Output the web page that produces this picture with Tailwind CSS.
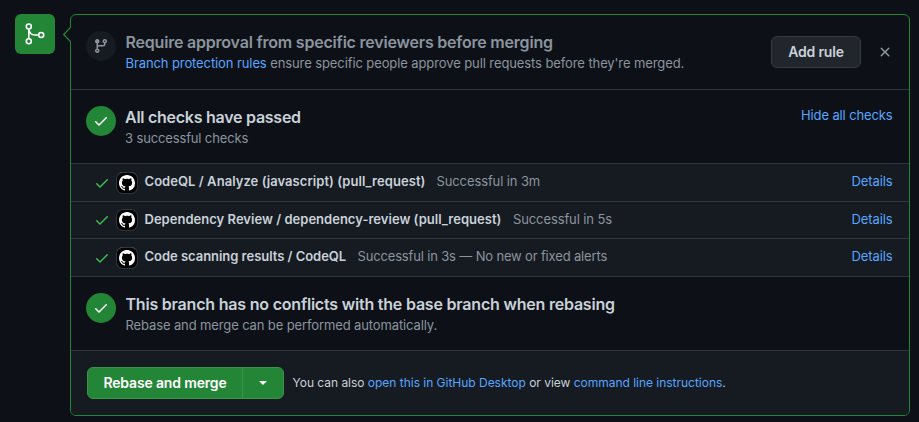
<!DOCTYPE html>
<html lang="en">
<head>
<meta charset="utf-8">
<title>Merge status</title>
<script src="https://cdn.jsdelivr.net/npm/@tailwindcss/browser@4"></script>
</head>
<body class="bg-[#0d1117] w-[919px] h-[422px] overflow-hidden font-['Inter','Liberation_Sans',sans-serif] text-[13px] leading-5 text-[#c9d1d9]">
<svg class="hidden">
  <symbol id="check" viewBox="0 0 16 16"><path d="M13.78 4.22a.75.75 0 010 1.06l-7.25 7.25a.75.75 0 01-1.06 0L2.22 9.28a.75.75 0 011.06-1.06L6 10.94l6.72-6.72a.75.75 0 011.06 0z"/></symbol>
  <symbol id="mark" viewBox="0 0 16 16"><path d="M8 0C3.58 0 0 3.58 0 8c0 3.54 2.29 6.53 5.47 7.59.4.07.55-.17.55-.38 0-.19-.01-.82-.01-1.49-2.01.37-2.53-.49-2.69-.94-.09-.23-.48-.94-.82-1.13-.28-.15-.68-.52-.01-.53.63-.01 1.08.58 1.23.82.72 1.21 1.87.87 2.33.66.07-.52.28-.87.51-1.07-1.78-.2-3.64-.89-3.64-3.95 0-.87.31-1.59.82-2.15-.08-.2-.36-1.02.08-2.12 0 0 .67-.21 2.2.82.64-.18 1.32-.27 2-.27.68 0 1.36.09 2 .27 1.53-1.04 2.2-.82 2.2-.82.44 1.1.16 1.92.08 2.12.51.56.82 1.27.82 2.15 0 3.07-1.87 3.75-3.65 3.95.29.25.54.73.54 1.48 0 1.07-.01 1.93-.01 2.2 0 .21.15.46.55.38A8.013 8.013 0 0016 8c0-4.42-3.58-8-8-8z"/></symbol>
</svg>
<div class="flex pt-[14px] pl-[15px] gap-[15px]">
  <div class="size-10 shrink-0 rounded-md bg-[#238636] text-white">
    <svg class="size-10" viewBox="0 0 40 40" fill="none" stroke="currentColor" stroke-width="1.6"><circle cx="13.800" cy="12.500" r="2.500"/><circle cx="13.800" cy="27.200" r="2.500"/><circle cx="26.200" cy="21" r="2.500"/><path d="M13.800 15v9.700M13.800 15c.3 3.800 3 6 6.500 6h3.300"/></svg>
  </div>
  <div class="relative w-[840px] h-[402px] rounded-md border border-[#238636] flex flex-col">
    <svg class="absolute -left-2 top-[11px] w-2 h-[18px]" viewBox="0 0 8 18"><path d="M8 1.200.7 8.500 8 15.800z" fill="#0d1117"/><path d="M7.700 1.200.7 8.500l7 7.300" fill="none" stroke="#238636" stroke-width="1.300"/></svg>
    <section class="h-[75px] shrink-0 border-b border-[#30363d] flex pl-[15px] pr-[16px]">
      <div class="size-[30px] mt-4 rounded-full bg-[#161b22] text-[#8b949e] grid place-items-center"><svg class="size-4" viewBox="0 0 16 16" fill="currentColor"><path d="M11.750 2.500a.75.75 0 100 1.500.75.75 0 000-1.500zm-2.250.75a2.250 2.250 0 113 2.122V6A2.500 2.500 0 0110 8.500H6a1 1 0 00-1 1v1.128a2.251 2.251 0 11-1.500 0V5.372a2.250 2.250 0 111.500 0v1.836A2.492 2.492 0 016 7h4a1 1 0 001-1v-.628A2.250 2.250 0 019.500 3.250zM4.250 12a.75.75 0 100 1.500.75.75 0 000-1.500zM3.500 3.250a.75.75 0 111.500 0 .75.75 0 01-1.500 0z"/></svg></div>
      <div class="ml-[9.5px] pt-4 grow whitespace-nowrap text-[#8b949e]">
        <h3 class="text-base leading-[22px] font-semibold tracking-[-0.205px]">Require approval from specific reviewers before merging</h3>
        <p class="tracking-[-0.1px]"><a class="text-[#58a6ff]">Branch protection rules</a> ensure specific people approve pull requests before they're merged.</p>
      </div>
      <button class="mt-[21px] w-[90px] h-8 rounded-md border border-[#363b42] bg-[#21262d] text-sm font-semibold tracking-[-0.2px]">Add rule</button>
      <svg class="size-4 mt-[29px] ml-4 text-[#8b949e]" viewBox="0 0 16 16" fill="currentColor"><path d="M3.720 3.720a.75.75 0 011.060 0L8 6.940l3.220-3.220a.75.75 0 111.060 1.060L9.060 8l3.220 3.220a.75.75 0 11-1.060 1.060L8 9.060l-3.220 3.220a.75.75 0 01-1.060-1.060L6.940 8 3.720 4.780a.75.75 0 010-1.060z"/></svg>
    </section>
    <section class="h-[74px] shrink-0 border-b border-[#30363d] flex pl-[15px] pr-[16.5px]">
      <div class="size-[30px] mt-4 rounded-full bg-[#238636] text-white grid place-items-center"><svg class="size-4" fill="currentColor"><use href="#check"/></svg></div>
      <div class="ml-[9px] pt-4 grow whitespace-nowrap text-[#8b949e]">
        <h3 class="text-base leading-[22px] font-semibold tracking-[-0.26px] text-[#c9d1d9]">All checks have passed</h3>
        <p class="tracking-[-0.14px]">3 successful checks</p>
      </div>
      <a class="mt-[15px] text-[#58a6ff] tracking-[-0.13px]">Hide all checks</a>
    </section>
    <ul class="shrink-0 bg-[#161b22] whitespace-nowrap">
      <li class="h-[38px] border-b border-[#30363d] flex items-center pl-[23px] pr-[16.5px]">
        <svg class="size-4 text-[#3fb950]" fill="currentColor"><use href="#check"/></svg>
        <span class="ml-[7px] size-5 rounded-md bg-black text-white grid place-items-center shadow-[0_0_0_1px_#30363d,0_-1px_0_0_#8b949e]"><svg class="size-4" fill="currentColor"><use href="#mark"/></svg></span>
        <strong class="ml-[7.5px] pb-[3px] w-[292px] font-semibold tracking-[0.05px]">CodeQL / Analyze (javascript) (pull_request)</strong>
        <span class="grow pb-[3px] text-[#8b949e] tracking-[-0.11px]">Successful in 3m</span>
        <a class="pb-[3px] text-[#58a6ff] tracking-[-0.1px]">Details</a>
      </li>
      <li class="h-[37px] border-b border-[#30363d] flex items-center pl-[23px] pr-[16.5px]">
        <svg class="size-4 text-[#3fb950]" fill="currentColor"><use href="#check"/></svg>
        <span class="ml-[7px] size-5 rounded-md bg-black text-white grid place-items-center shadow-[0_0_0_1px_#30363d]"><svg class="size-4" fill="currentColor"><use href="#mark"/></svg></span>
        <strong class="ml-[7.5px] pb-[2px] w-[368.5px] font-semibold tracking-[0.02px]">Dependency Review / dependency-review (pull_request)</strong>
        <span class="grow pb-[2px] text-[#8b949e] tracking-[-0.11px]">Successful in 5s</span>
        <a class="pb-[2px] text-[#58a6ff] tracking-[-0.1px]">Details</a>
      </li>
      <li class="h-[38px] border-b border-[#30363d] flex items-center pl-[23px] pr-[16.5px]">
        <svg class="size-4 text-[#3fb950]" fill="currentColor"><use href="#check"/></svg>
        <span class="ml-[7px] size-5 rounded-md bg-black text-white grid place-items-center shadow-[0_0_0_1px_#30363d,0_-1px_0_0_#8b949e]"><svg class="size-4" fill="currentColor"><use href="#mark"/></svg></span>
        <strong class="ml-[7.5px] pb-[3px] w-[213px] font-semibold tracking-[-0.03px]">Code scanning results / CodeQL</strong>
        <span class="grow pb-[3px] text-[#8b949e] tracking-[-0.16px]">Successful in 3s — No new or fixed alerts</span>
        <a class="pb-[3px] text-[#58a6ff] tracking-[-0.1px]">Details</a>
      </li>
    </ul>
    <section class="h-[74px] shrink-0 border-b border-[#30363d] flex pl-[15px]">
      <div class="size-[30px] mt-4 rounded-full bg-[#238636] text-white grid place-items-center"><svg class="size-4" fill="currentColor"><use href="#check"/></svg></div>
      <div class="ml-[9.5px] pt-4 whitespace-nowrap text-[#8b949e]">
        <h3 class="text-base leading-[22px] font-semibold tracking-[-0.205px] text-[#c9d1d9]">This branch has no conflicts with the base branch when rebasing</h3>
        <p class="tracking-[-0.12px]">Rebase and merge can be performed automatically.</p>
      </div>
    </section>
    <footer class="grow rounded-b-[5px] bg-[#161b22] flex items-center pl-4 whitespace-nowrap">
      <div class="flex h-8 w-[197px] rounded-md border border-[#399549] bg-[#238636] text-white">
        <button class="w-[155px] border-r border-[#399549] text-sm font-semibold tracking-[-0.16px]">Rebase and merge</button>
        <button class="grow grid place-items-center"><span class="border-x-4 border-t-4 border-x-transparent border-t-white"></span></button>
      </div>
      <p class="ml-[8.5px] text-xs tracking-[-0.02px]">You can also <a class="text-[#58a6ff]">open this in GitHub Desktop</a> or view <a class="text-[#58a6ff]">command line instructions</a>.</p>
    </footer>
  </div>
</div>
</body>
</html>
